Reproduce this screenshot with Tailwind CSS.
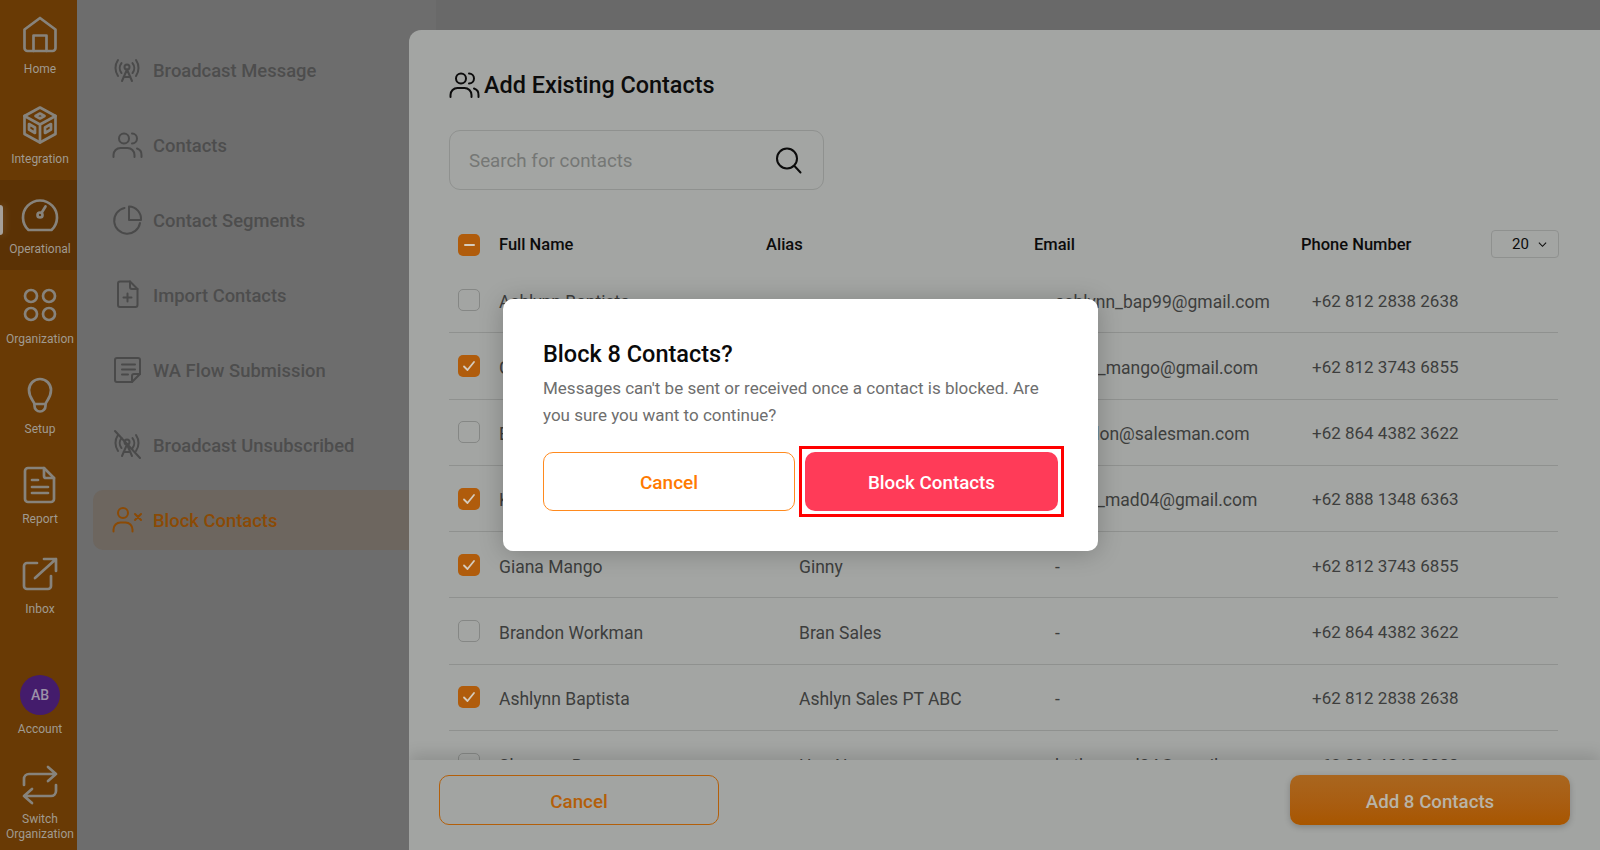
<!DOCTYPE html>
<html lang="en">
<head>
    <meta charset="UTF-8">
    <title>Block Contacts</title>
    <script src="https://cdn.jsdelivr.net/npm/@tailwindcss/browser@4"></script>
</head>
<body class="relative w-[1600px] h-[850px] overflow-hidden bg-[#696969] font-['Roboto',sans-serif]">
    <div class="flex h-full">
        <!-- main nav -->
        <nav class="w-[77px] h-full shrink-0 bg-[#693a05] flex flex-col text-[#a09a90] text-[12px] leading-[15px] text-center">
            <a class="h-[90px] pt-[15px] pl-[3px] flex flex-col items-center">
                <svg class="w-10 h-10 mb-[7px] shrink-0" viewBox="0 0 40 40" fill="none" stroke="#87837c" stroke-width="2.7" stroke-linejoin="round" stroke-linecap="round"><path d="M4.5 14.5 20 3l15.5 11.5V33a3 3 0 0 1-3 3h-25a3 3 0 0 1-3-3z"/><path d="M13.5 36V20.5h13V36"/></svg>
                <span>Home</span>
            </a>
            <a class="h-[90px] pt-[15px] pl-[3px] flex flex-col items-center">
                <svg class="w-10 h-10 mb-[7px] shrink-0" viewBox="0 0 40 40" fill="none" stroke="#87837c" stroke-width="2.7" stroke-linejoin="round" stroke-linecap="round"><path d="M20 2.5 35.5 11v18L20 37.5 4.5 29V11z"/><path d="M4.5 11 20 19.5 35.5 11M20 19.5v18"/><path d="M15.5 11 20 8.5l4.5 2.5-4.5 2.5zM9 19l6 3.5V28l-6-3.5zM31 19l-6 3.5V28l6-3.5z"/></svg>
                <span>Integration</span>
            </a>
            <a class="relative h-[90px] pt-[15px] pl-[3px] flex flex-col items-center bg-[#5b3205]">
                <span class="absolute left-0 top-[25px] w-[3px] h-[30px] bg-[#a5a09a] rounded-r-sm shadow-[0_0_8px_rgba(255,255,255,0.25)]"></span>
                <svg class="w-10 h-10 mb-[7px] shrink-0" viewBox="0 0 40 40" fill="none" stroke="#87837c" stroke-width="2.7" stroke-linejoin="round" stroke-linecap="round"><path d="M8.5 35a17 17 0 1 1 23 0z"/><circle cx="20" cy="20" r="2.5"/><path d="M21.5 18 25.5 11.5"/></svg>
                <span>Operational</span>
            </a>
            <a class="h-[90px] pt-[15px] pl-[3px] flex flex-col items-center">
                <svg class="w-10 h-10 mb-[7px] shrink-0" viewBox="0 0 40 40" fill="none" stroke="#87837c" stroke-width="2.7"><circle cx="11" cy="11" r="6"/><circle cx="29" cy="11" r="6"/><circle cx="11" cy="29" r="6"/><circle cx="29" cy="29" r="6"/></svg>
                <span>Organization</span>
            </a>
            <a class="h-[90px] pt-[15px] pl-[3px] flex flex-col items-center">
                <svg class="w-10 h-10 mb-[7px] shrink-0" viewBox="0 0 40 40" fill="none" stroke="#87837c" stroke-width="2.7" stroke-linejoin="round" stroke-linecap="round"><path d="M14.5 29c-.5-3-5.5-6-5.5-14a11 11 0 0 1 22 0c0 8-5 11-5.5 14z"/><path d="M14.5 29v2a5.5 5.5 0 0 0 11 0v-2"/></svg>
                <span>Setup</span>
            </a>
            <a class="h-[90px] pt-[15px] pl-[3px] flex flex-col items-center">
                <svg class="w-10 h-10 mb-[7px] shrink-0" viewBox="0 0 40 40" fill="none" stroke="#87837c" stroke-width="2.7" stroke-linejoin="round" stroke-linecap="round"><path d="M8 3h16l10 10v21a3 3 0 0 1-3 3H8a3 3 0 0 1-3-3V6a3 3 0 0 1 3-3z"/><path d="M24 3v8a2 2 0 0 0 2 2h8M12 15h6M12 22h16M12 28h16"/></svg>
                <span>Report</span>
            </a>
            <a class="h-[90px] pt-[15px] pl-[3px] flex flex-col items-center">
                <svg class="w-10 h-10 mb-[7px] shrink-0" viewBox="0 0 40 40" fill="none" stroke="#87837c" stroke-width="2.7" stroke-linejoin="round" stroke-linecap="round"><path d="M17 8H7a3 3 0 0 0-3 3v20a3 3 0 0 0 3 3h21a3 3 0 0 0 3-3V21"/><path d="M15 23 36 4M24 4h12v12"/></svg>
                <span>Inbox</span>
            </a>
            <div class="h-[30px] shrink-0"></div>
            <a class="h-[90px] pt-[15px] pl-[3px] flex flex-col items-center">
                <div class="w-10 h-10 mb-[7px] shrink-0 rounded-full bg-[#441c6c] flex items-center justify-center text-[#9c92a8] text-[14px] font-medium">AB</div>
                <span>Account</span>
            </a>
            <a class="h-[90px] pt-[15px] pl-[3px] flex flex-col items-center">
                <svg class="w-10 h-10 mb-[7px] shrink-0" viewBox="0 0 40 40" fill="none" stroke="#87837c" stroke-width="2.7" stroke-linejoin="round" stroke-linecap="round"><path d="M4 20v-6a5 5 0 0 1 5-5h27M28 2l8 7-8 7"/><path d="M36 20v6a5 5 0 0 1-5 5H4M12 24l-8 7 8 7"/></svg>
                <span>Switch<br>Organization</span>
            </a>
        </nav>

        <!-- sub nav -->
        <aside class="w-[359px] h-full shrink-0 bg-[#6d6d6d] pt-[40px] pl-[16px] text-[#4d4d4d] text-[18.4px] font-medium">
            <a class="h-[60px] mb-[15px] pl-[18px] flex items-center gap-[10px]">
                <svg class="w-8 h-8" viewBox="0 0 32 32" fill="none" stroke="#4a4a4a" stroke-width="2" stroke-linecap="round" stroke-linejoin="round"><path d="M7 6a14 14 0 0 0 0 16M25 6a14 14 0 0 1 0 16M10.5 9a8 8 0 0 0 0 10M21.5 9a8 8 0 0 1 0 10"/><circle cx="16" cy="13" r="2.5"/><path d="M16 15.5 11 27M16 15.5 21 27M12.5 23h7"/></svg>
                <span class="pt-0.5">Broadcast Message</span>
            </a>
            <a class="h-[60px] mb-[15px] pl-[18px] flex items-center gap-[10px]">
                <svg class="w-8 h-8" viewBox="0 0 32 32" fill="none" stroke="#4a4a4a" stroke-width="2" stroke-linecap="round" stroke-linejoin="round"><circle cx="13" cy="9.5" r="5"/><path d="M21 4.5a5 5 0 0 1 0 10M2.5 28v-2a7 7 0 0 1 7-7h7a7 7 0 0 1 7 7v2M26 19.500a6.500 6.500 0 0 1 4.500 6.500v2"/></svg>
                <span class="pt-0.5">Contacts</span>
            </a>
            <a class="h-[60px] mb-[15px] pl-[18px] flex items-center gap-[10px]">
                <svg class="w-8 h-8" viewBox="0 0 32 32" fill="none" stroke="#4a4a4a" stroke-width="2" stroke-linecap="round" stroke-linejoin="round"><path d="M13.5 4A13 13 0 1 0 29 19"/><path d="M18 2.5V16h12A12.5 12.5 0 0 0 18 2.5z"/></svg>
                <span class="pt-0.5">Contact Segments</span>
            </a>
            <a class="h-[60px] mb-[15px] pl-[18px] flex items-center gap-[10px]">
                <svg class="w-8 h-8" viewBox="0 0 32 32" fill="none" stroke="#4a4a4a" stroke-width="2" stroke-linecap="round" stroke-linejoin="round"><path d="M9 2.5h10l7.5 7.5v16a2 2 0 0 1-2 2H9a2 2 0 0 1-2-2V4.5a2 2 0 0 1 2-2z"/><path d="M19 2.5V8a2 2 0 0 0 2 2h5.5M16.5 14.5v8M12.5 18.5h8"/></svg>
                <span class="pt-0.5">Import Contacts</span>
            </a>
            <a class="h-[60px] mb-[15px] pl-[18px] flex items-center gap-[10px]">
                <svg class="w-8 h-8" viewBox="0 0 32 32" fill="none" stroke="#4a4a4a" stroke-width="2" stroke-linecap="round" stroke-linejoin="round"><path d="M21 28H6a2 2 0 0 1-2-2V6a2 2 0 0 1 2-2h21a2 2 0 0 1 2 2v14z"/><path d="M21 28v-6a2 2 0 0 1 2-2h6M11 10.5h13M11 15.5h13M11 20.5h6"/></svg>
                <span class="pt-0.5">WA Flow Submission</span>
            </a>
            <a class="h-[60px] mb-[15px] pl-[18px] flex items-center gap-[10px]">
                <svg class="w-8 h-8" viewBox="0 0 32 32" fill="none" stroke="#4a4a4a" stroke-width="2" stroke-linecap="round" stroke-linejoin="round"><path d="M7 6a14 14 0 0 0 0 16M25 6a14 14 0 0 1 0 16M10.5 9a8 8 0 0 0 0 10M21.5 9a8 8 0 0 1 0 10"/><circle cx="16" cy="13" r="2.5"/><path d="M16 15.5 11 27M16 15.5 21 27M12.5 23h7M4 2l25 27"/></svg>
                <span class="pt-0.5">Broadcast Unsubscribed</span>
            </a>
            <a class="h-[60px] mb-[15px] pl-[18px] flex items-center gap-[10px] rounded-l-[10px] bg-[#6d665f] text-[#8b4a05]">
                <svg class="w-8 h-8" viewBox="0 0 32 32" fill="none" stroke="#8b4a05" stroke-width="2" stroke-linecap="round" stroke-linejoin="round"><circle cx="12" cy="9" r="5"/><path d="M2.5 27.5v-2a7 7 0 0 1 7-7h5a7 7 0 0 1 7 7v2M24 10l6 6M30 10l-6 6"/></svg>
                <span class="pt-0.5">Block Contacts</span>
            </a>
        </aside>
    </div>

    <!-- add existing contacts drawer -->
    <section class="absolute left-[409px] top-[30px] right-0 bottom-0 rounded-tl-[12px] bg-[#a3a5a3] flex flex-col overflow-hidden">
        <div class="flex-1 min-h-0 overflow-hidden pl-[40px] pr-[42px] pt-[39px]">
            <h2 class="h-8 flex items-center gap-[4px] text-[23.4px] font-medium text-[#0c0c0c]">
                <svg class="w-8 h-8 -ml-px" viewBox="0 0 32 32" fill="none" stroke="#0c0c0c" stroke-width="2" stroke-linecap="round" stroke-linejoin="round"><circle cx="13" cy="9.5" r="5"/><path d="M21 4.5a5 5 0 0 1 0 10M2.5 28v-2a7 7 0 0 1 7-7h7a7 7 0 0 1 7 7v2M26 19.5a6.5 6.5 0 0 1 4.5 6.5v2"/></svg>
                <span class="pt-0.5">Add Existing Contacts</span>
            </h2>
            <div class="mt-[29px] w-[375px] h-[60px] rounded-[11px] border border-[#8f918f] pl-[19px] pr-[21px] flex items-center justify-between">
                <span class="pt-0.5 text-[18.8px] text-[#757775]">Search for contacts</span>
                <svg class="w-[28px] h-[28px]" viewBox="0 0 28 28" fill="none" stroke="#0c0c0c" stroke-width="2" stroke-linecap="round"><circle cx="13" cy="12.5" r="10"/><path d="m20.5 20 6 6.5"/></svg>
            </div>

            <div class="relative mt-[33px] h-[44px] pl-[9px] flex items-center text-[16.5px] font-medium text-[#0c0c0c]">
                <div class="w-[22px] h-[22px] mr-[19px] rounded-[5px] bg-[#b05c0c] flex items-center justify-center"><div class="w-[11px] h-[2.5px] rounded-sm bg-[#d5cbbd]"></div></div>
                <div class="grid grid-cols-[267px_268px_267px_1fr] flex-1">
                    <span>Full Name</span><span>Alias</span><span>Email</span><span>Phone Number</span>
                </div>
                <div class="absolute -right-px top-[7px] w-[68px] h-[28px] rounded-[4px] border border-[#8f918f] text-[15px] font-normal flex items-center pl-[20px] gap-[9px]">
                    <span>20</span>
                    <svg class="w-[9px] h-[9px]" viewBox="0 0 10 10" fill="none" stroke="#0c0c0c" stroke-width="1.2"><path d="m1 3 4 4 4-4"/></svg>
                </div>
            </div>

            <div class="text-[17.5px] text-[#3d3e3d]">
                <div class="h-[66.3px] pl-[9px] border-b border-[#8f918f] flex items-center">
                    <div class="w-[22px] h-[22px] mr-[19px] rounded-[5px] border-[1.5px] border-[#858785]"></div>
                    <div class="grid grid-cols-[300px_256px_257px_1fr] flex-1 pt-1"><span>Ashlynn Baptista</span><span></span><span>ashlynn_bap99@gmail.com</span><span class="text-[17px]">+62 812 2838 2638</span></div>
                </div>
                <div class="h-[66.3px] pl-[9px] border-b border-[#8f918f] flex items-center">
                    <div class="w-[22px] h-[22px] mr-[19px] rounded-[5px] bg-[#b05c0c] flex items-center justify-center"><svg class="w-[14px] h-[14px]" viewBox="0 0 14 14" fill="none" stroke="#d5cbbd" stroke-width="1.8" stroke-linecap="round" stroke-linejoin="round"><path d="m2 7.5 3.5 3.5L12 3"/></svg></div>
                    <div class="grid grid-cols-[300px_256px_257px_1fr] flex-1 pt-1"><span>Giana Mango</span><span></span><span>giana_mango@gmail.com</span><span class="text-[17px]">+62 812 3743 6855</span></div>
                </div>
                <div class="h-[66.3px] pl-[9px] border-b border-[#8f918f] flex items-center">
                    <div class="w-[22px] h-[22px] mr-[19px] rounded-[5px] border-[1.5px] border-[#858785]"></div>
                    <div class="grid grid-cols-[300px_256px_257px_1fr] flex-1 pt-1"><span>Brandon Workman</span><span></span><span>brandon@salesman.com</span><span class="text-[17px]">+62 864 4382 3622</span></div>
                </div>
                <div class="h-[66.3px] pl-[9px] border-b border-[#8f918f] flex items-center">
                    <div class="w-[22px] h-[22px] mr-[19px] rounded-[5px] bg-[#b05c0c] flex items-center justify-center"><svg class="w-[14px] h-[14px]" viewBox="0 0 14 14" fill="none" stroke="#d5cbbd" stroke-width="1.8" stroke-linecap="round" stroke-linejoin="round"><path d="m2 7.5 3.5 3.5L12 3"/></svg></div>
                    <div class="grid grid-cols-[300px_256px_257px_1fr] flex-1 pt-1"><span>Kathy Madsen</span><span></span><span>kathy_mad04@gmail.com</span><span class="text-[17px]">+62 888 1348 6363</span></div>
                </div>
                <div class="h-[66.3px] pl-[9px] border-b border-[#8f918f] flex items-center">
                    <div class="w-[22px] h-[22px] mr-[19px] rounded-[5px] bg-[#b05c0c] flex items-center justify-center"><svg class="w-[14px] h-[14px]" viewBox="0 0 14 14" fill="none" stroke="#d5cbbd" stroke-width="1.8" stroke-linecap="round" stroke-linejoin="round"><path d="m2 7.5 3.5 3.5L12 3"/></svg></div>
                    <div class="grid grid-cols-[300px_256px_257px_1fr] flex-1 pt-1"><span>Giana Mango</span><span>Ginny</span><span>-</span><span class="text-[17px]">+62 812 3743 6855</span></div>
                </div>
                <div class="h-[66.3px] pl-[9px] border-b border-[#8f918f] flex items-center">
                    <div class="w-[22px] h-[22px] mr-[19px] rounded-[5px] border-[1.5px] border-[#858785]"></div>
                    <div class="grid grid-cols-[300px_256px_257px_1fr] flex-1 pt-1"><span>Brandon Workman</span><span>Bran Sales</span><span>-</span><span class="text-[17px]">+62 864 4382 3622</span></div>
                </div>
                <div class="h-[66.3px] pl-[9px] border-b border-[#8f918f] flex items-center">
                    <div class="w-[22px] h-[22px] mr-[19px] rounded-[5px] bg-[#b05c0c] flex items-center justify-center"><svg class="w-[14px] h-[14px]" viewBox="0 0 14 14" fill="none" stroke="#d5cbbd" stroke-width="1.8" stroke-linecap="round" stroke-linejoin="round"><path d="m2 7.5 3.5 3.5L12 3"/></svg></div>
                    <div class="grid grid-cols-[300px_256px_257px_1fr] flex-1 pt-1"><span>Ashlynn Baptista</span><span>Ashlyn Sales PT ABC</span><span>-</span><span class="text-[17px]">+62 812 2838 2638</span></div>
                </div>
                <div class="h-[66.3px] pl-[9px] border-b border-[#8f918f] flex items-center">
                    <div class="w-[22px] h-[22px] mr-[19px] rounded-[5px] border-[1.5px] border-[#858785]"></div>
                    <div class="grid grid-cols-[300px_256px_257px_1fr] flex-1 pt-1"><span>Shannon Bryan</span><span>Han Nguyen</span><span>kathy_mad04@gmail.com</span><span class="text-[17px]">+62 896 4848 8888</span></div>
                </div>
            </div>
        </div>

        <footer class="relative h-[90px] shrink-0 bg-[#a2a4a2] px-[30px] pt-[15px] flex justify-between shadow-[0_-6px_14px_rgba(0,0,0,0.12)]">
            <button class="w-[280px] h-[50px] pt-1 rounded-[10px] border border-[#b35f0a] text-[18.8px] font-medium text-[#b35f0a]">Cancel</button>
            <button class="w-[280px] h-[50px] pt-1 rounded-[10px] bg-linear-to-b from-[#a9661f] to-[#a85600] text-[18.7px] font-medium text-[#b9b4a8] shadow-[0_2px_6px_rgba(0,0,0,0.2)]">Add 8 Contacts</button>
        </footer>
    </section>

    <!-- confirm dialog -->
    <div class="absolute left-[503px] top-[299px] w-[595px] h-[252px] rounded-[10px] bg-white pt-[39px] px-[40px] shadow-[0_2px_24px_rgba(0,0,0,0.22)]">
        <h3 class="h-8 leading-8 text-[23.5px] font-medium text-[#0a0a0a]">Block 8 Contacts?</h3>
        <p class="mt-[5px] text-[17px] leading-[26.5px] text-[#6e6e6e]">Messages can't be sent or received once a contact is blocked. Are you sure you want to continue?</p>
        <div class="mt-[24px] flex gap-[10px]">
            <button class="w-[252px] h-[59px] pt-1 rounded-[10px] border border-[#ff8a1e] text-[19px] font-medium text-[#ff7a00]">Cancel</button>
            <div class="relative">
                <button class="w-[253px] h-[59px] pt-1 rounded-[10px] bg-[#ff3b58] text-[18.8px] font-medium text-white">Block Contacts</button>
                <span class="absolute -inset-[6px] border-[3px] border-[#ff0000]"></span>
            </div>
        </div>
    </div>
</body>
</html>
